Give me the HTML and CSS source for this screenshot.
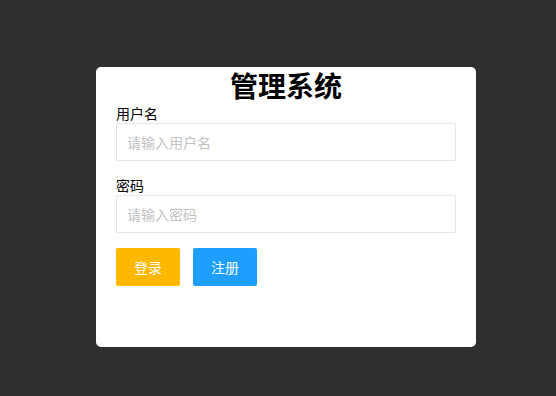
FILE: index.html
```html
<!DOCTYPE html>
<html lang="zh-CN">
<head>
<meta charset="utf-8">
<title>管理系统</title>
<link rel="stylesheet" href="styles.css">
</head>
<body>
<div class="page">
  <form class="card">
    <h2 class="title">管理系统</h2>
    <div class="item">
      <label class="label">用户名</label>
      <input class="input" type="text" placeholder="请输入用户名">
    </div>
    <div class="item">
      <label class="label">密码</label>
      <input class="input" type="password" placeholder="请输入密码">
    </div>
    <div class="actions">
      <button type="button" class="btn btn-warm">登录</button>
      <button type="button" class="btn btn-normal">注册</button>
    </div>
  </form>
</div>
</body>
</html>
```

FILE: styles.css
```css
html, body {
  margin: 0;
  padding: 0;
  background: #2f2f2f;
  height: 100%;
}
body {
  font-family: "Noto Sans CJK SC", "Noto Sans", sans-serif;
  font-size: 14px;
  color: #000;
}
.page {
  padding: 67px 0 0 96px;
}
.card {
  box-sizing: border-box;
  width: 380px;
  height: 280px;
  background: #fff;
  border-radius: 5px;
  padding: 0 20px;
  display: flex;
  flex-direction: column;
}
.title {
  margin: 0;
  font-size: 28px;
  line-height: 37px;
  font-weight: bold;
  text-align: center;
}
.item {
  display: flex;
  flex-direction: column;
  margin-bottom: 15px;
}
.label {
  line-height: 19px;
  font-size: 14px;
}
.input {
  box-sizing: border-box;
  height: 38px;
  width: 340px;
  border: 1px solid #e6e6e6;
  border-radius: 2px;
  padding: 0 10px;
  font-family: inherit;
  font-size: 14px;
  color: #333;
  outline: none;
  margin: 0;
}
.input::placeholder {
  color: #c2c2c2;
}
.actions {
  display: flex;
  gap: 13px;
}
.btn {
  height: 38px;
  padding: 0 18px;
  border: none;
  border-radius: 2px;
  color: #fff;
  font-family: inherit;
  font-size: 14px;
  cursor: pointer;
}
.btn-warm {
  background: #ffb800;
}
.btn-normal {
  background: #1e9fff;
}
```
